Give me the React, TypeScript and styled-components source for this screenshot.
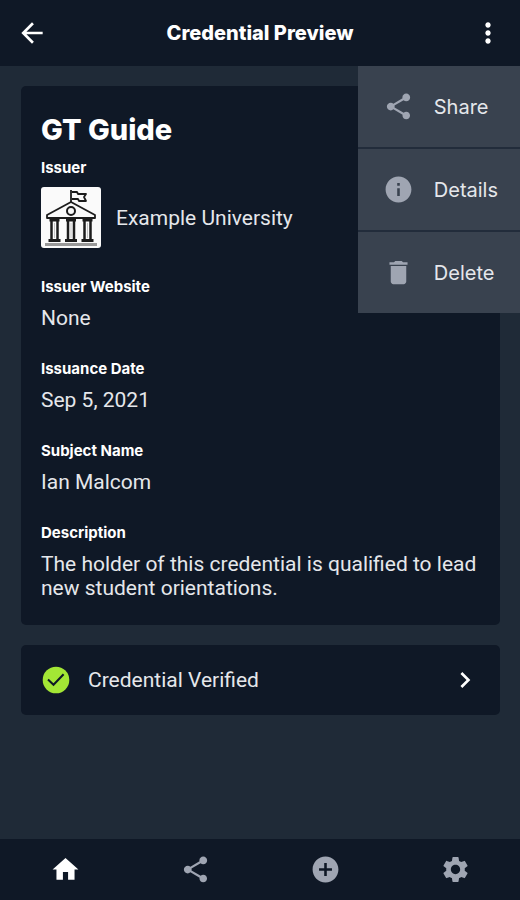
import React from "react";
import styled, { createGlobalStyle } from "styled-components";
import {
  MdAddCircle,
  MdArrowBack,
  MdChevronRight,
  MdDelete,
  MdHome,
  MdInfo,
  MdMoreVert,
  MdSettings,
  MdShare,
} from "react-icons/md";

const color = {
  surface: "#0f1826",
  page: "#1f2a37",
  menu: "#39424f",
  divider: "#222c3b",
  text: "#e5e7eb",
  strong: "#ffffff",
  muted: "#9fa5b2",
  success: "#a3e635",
};

const GlobalStyle = createGlobalStyle`
  * { box-sizing: border-box; }
  body {
    margin: 0;
    background: ${color.page};
    color: ${color.text};
    font-family: Inter, Roboto, sans-serif;
  }
`;

const Screen = styled.div`
  display: flex;
  flex-direction: column;
  min-height: 100vh;
`;

const Header = styled.header`
  position: relative;
  display: grid;
  grid-template-columns: 32px 1fr 32px;
  align-items: center;
  height: 66px;
  padding: 0 16px;
  background: ${color.surface};
`;

const HeaderTitle = styled.h1`
  margin: 0;
  text-align: center;
  font-size: 20px;
  line-height: 24px;
  font-weight: 800;
  color: ${color.strong};
`;

const IconButton = styled.button`
  display: flex;
  align-items: center;
  justify-content: center;
  padding: 0;
  border: 0;
  background: none;
  color: ${color.strong};
  cursor: pointer;
`;

const Menu = styled.div`
  position: absolute;
  top: 100%;
  right: 0;
  display: flex;
  flex-direction: column;
  gap: 2px;
  background: ${color.divider};
`;

const MenuItem = styled.button`
  display: flex;
  align-items: center;
  gap: 20px;
  height: 81px;
  padding: 0 22px 0 25px;
  border: 0;
  background: ${color.menu};
  color: ${color.text};
  font: inherit;
  font-size: 20px;
  line-height: 24px;
  cursor: pointer;

  svg {
    color: ${color.muted};
  }
`;

const Content = styled.main`
  flex: 1;
  display: flex;
  flex-direction: column;
  gap: 20px;
  padding: 20px 20px 20px 21px;
`;

const Card = styled.section`
  padding: 20px 20px 25px;
  border-radius: 5px;
  background: ${color.surface};
`;

const CardTitle = styled.h2`
  margin: 0 0 5px;
  font-size: 29px;
  line-height: 48px;
  font-weight: 800;
  color: ${color.strong};
`;

const Fields = styled.dl`
  display: flex;
  flex-direction: column;
  gap: 30px;
  margin: 0;
`;

const Field = styled.div`
  display: flex;
  flex-direction: column;
  gap: 10px;
`;

const Label = styled.dt`
  font-size: 15px;
  line-height: 18px;
  font-weight: 700;
  color: ${color.strong};
`;

const Value = styled.dd`
  display: flex;
  align-items: center;
  gap: 15px;
  margin: 0;
  font-family: Roboto, Inter, sans-serif;
  font-size: 21px;
  line-height: 24px;
`;

const StatusRow = styled.button`
  display: flex;
  align-items: center;
  gap: 17px;
  height: 70px;
  padding: 0 19px 0 20px;
  border: 0;
  border-radius: 5px;
  background: ${color.surface};
  color: ${color.text};
  font-family: Roboto, Inter, sans-serif;
  font-size: 21px;
  line-height: 24px;
  text-align: left;
  cursor: pointer;
`;

const StatusText = styled.span`
  flex: 1;
`;

const TabBar = styled.nav`
  display: grid;
  grid-template-columns: repeat(4, 1fr);
  height: 61px;
  background: ${color.surface};
`;

const Tab = styled.a<{ $active?: boolean }>`
  display: flex;
  align-items: center;
  justify-content: center;
  color: ${(p) => (p.$active ? color.strong : color.muted)};
`;

const UniversityLogo = () => (
  <svg width="60" height="61" viewBox="0 0 60 61" role="img" aria-label="Example University logo">
    <rect width="60" height="61" rx="3" fill="#fafafa" />
    <g fill="none" stroke="#1c1c1c" strokeWidth="1.800" strokeLinejoin="round">
      <path d="M30 15V3M31 5h5l1 2h8l-2 3 2 4h-7l-1-2h-6" />
      <path d="M30 15 54 28v3H6v-3Z" fill="#fafafa" />
      <circle cx="30" cy="24" r="4" strokeWidth="2" />
      {[13.5, 30, 46.5].map((x) => (
        <g key={x}>
          <path d={`M${x - 5} 33h10`} strokeWidth="3" />
          <path d={`M${x - 3} 34v18M${x + 3} 34v18`} strokeWidth="2.500" />
          <path d={`M${x} 36v15`} stroke="#c4c4c4" strokeWidth="1" />
          <path d={`M${x - 6} 53.500h12`} strokeWidth="3" />
        </g>
      ))}
    </g>
    <rect x="4" y="56" width="52" height="3" fill="#999" />
  </svg>
);

const CheckBadge = () => (
  <svg width="30" height="30" viewBox="0 0 30 30" aria-hidden="true">
    <circle cx="15" cy="15" r="13.300" fill={color.success} />
    <path d="M7 14.500 12.500 19.800 22.600 9.300" fill="none" stroke={color.surface} strokeWidth="2" />
  </svg>
);

const details = [
  { label: "Issuer Website", value: "None" },
  { label: "Issuance Date", value: "Sep 5, 2021" },
  { label: "Subject Name", value: "Ian Malcom" },
  {
    label: "Description",
    value: "The holder of this credential is qualified to lead new student orientations.",
  },
];

const menuItems = [
  { label: "Share", Icon: MdShare },
  { label: "Details", Icon: MdInfo },
  { label: "Delete", Icon: MdDelete },
];

const tabs = [
  { label: "Home", Icon: MdHome, active: true },
  { label: "Share", Icon: MdShare },
  { label: "Add", Icon: MdAddCircle },
  { label: "Settings", Icon: MdSettings },
];

export default function App() {
  return (
    <Screen>
      <GlobalStyle />
      <Header>
        <IconButton aria-label="Back">
          <MdArrowBack size={32} />
        </IconButton>
        <HeaderTitle>Credential Preview</HeaderTitle>
        <IconButton aria-label="More options" aria-expanded="true">
          <MdMoreVert size={32} />
        </IconButton>
        <Menu>
          {menuItems.map(({ label, Icon }) => (
            <MenuItem key={label}>
              <Icon size={31} />
              {label}
            </MenuItem>
          ))}
        </Menu>
      </Header>
      <Content>
        <Card>
          <CardTitle>GT Guide</CardTitle>
          <Fields>
            <Field>
              <Label>Issuer</Label>
              <Value>
                <UniversityLogo />
                Example University
              </Value>
            </Field>
            {details.map(({ label, value }) => (
              <Field key={label}>
                <Label>{label}</Label>
                <Value>{value}</Value>
              </Field>
            ))}
          </Fields>
        </Card>
        <StatusRow>
          <CheckBadge />
          <StatusText>Credential Verified</StatusText>
          <MdChevronRight size={32} color={color.strong} />
        </StatusRow>
      </Content>
      <TabBar aria-label="Main">
        {tabs.map(({ label, Icon, active }) => (
          <Tab key={label} href="#" aria-label={label} $active={active}>
            <Icon size={31} />
          </Tab>
        ))}
      </TabBar>
    </Screen>
  );
}
